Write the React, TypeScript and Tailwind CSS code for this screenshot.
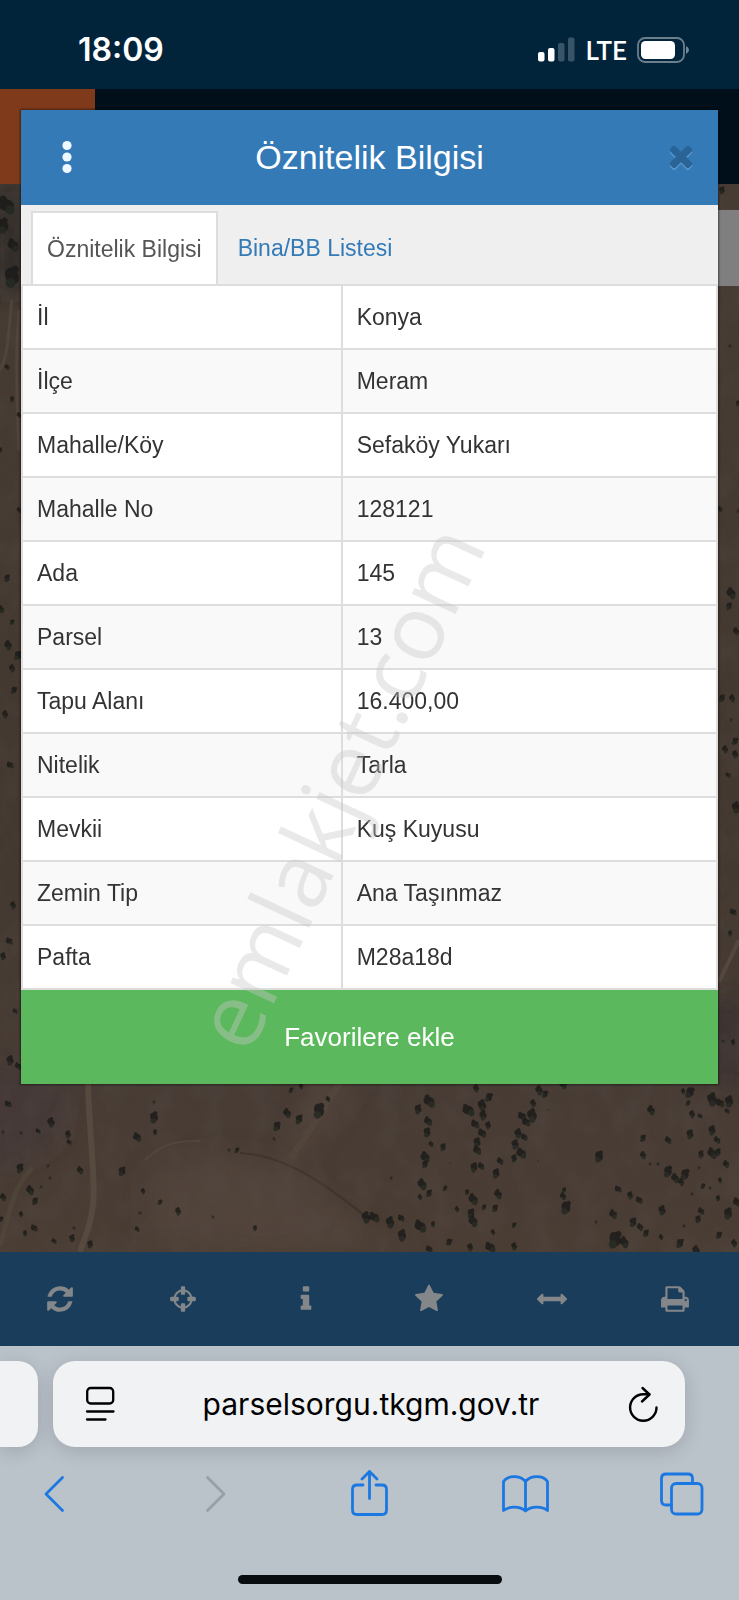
import type { ReactNode } from 'react';

const rows = [
  { label: 'İl', value: 'Konya' },
  { label: 'İlçe', value: 'Meram' },
  { label: 'Mahalle/Köy', value: 'Sefaköy Yukarı' },
  { label: 'Mahalle No', value: '128121' },
  { label: 'Ada', value: '145' },
  { label: 'Parsel', value: '13' },
  { label: 'Tapu Alanı', value: '16.400,00' },
  { label: 'Nitelik', value: 'Tarla' },
  { label: 'Mevkii', value: 'Kuş Kuyusu' },
  { label: 'Zemin Tip', value: 'Ana Taşınmaz' },
  { label: 'Pafta', value: 'M28a18d' },
];

const tools = [
  {
    label: 'Yenile',
    path: 'M1639 1056q0 5-1 7-64 268-268 434.5t-478 166.5q-146 0-282.5-55t-243.5-157l-129 129q-19 19-45 19t-45-19-19-45v-448q0-26 19-45t45-19h448q26 0 45 19t19 45-19 45l-137 137q71 66 161 102t187 36q134 0 250-65t186-179q11-17 53-117 8-23 30-23h192q13 0 22.5 9.5t9.5 22.5zm25-800v448q0 26-19 45t-45 19h-448q-26 0-45-19t-19-45 19-45l138-138q-148-137-349-137-134 0-250 65t-186 179q-11 17-53 117-8 23-30 23h-199q-13 0-22.5-9.5t-9.5-22.5v-7q65-268 270-434.5t480-166.5q146 0 284 55.5t245 156.5l130-129q19-19 45-19t45 19 19 45z',
  },
  {
    label: 'Konum',
    path: 'M1325 1024h-109q-26 0-45-19t-19-45v-128q0-26 19-45t45-19h109q-32-108-112.5-188.5t-188.5-112.5v109q0 26-19 45t-45 19h-128q-26 0-45-19t-19-45v-109q-108 32-188.5 112.5t-112.5 188.5h109q26 0 45 19t19 45v128q0 26-19 45t-45 19h-109q32 108 112.5 188.5t188.5 112.5v-109q0-26 19-45t45-19h128q26 0 45 19t19 45v109q108-32 188.5-112.5t112.5-188.5zm339-192v128q0 26-19 45t-45 19h-143q-37 161-154.5 278.5t-278.5 154.5v143q0 26-19 45t-45 19h-128q-26 0-45-19t-19-45v-143q-161-37-278.5-154.5t-154.5-278.5h-143q-26 0-45-19t-19-45v-128q0-26 19-45t45-19h143q37-161 154.5-278.5t278.5-154.5v-143q0-26 19-45t45-19h128q26 0 45 19t19 45v143q161 37 278.5 154.5t154.5 278.5h143q26 0 45 19t19 45z',
  },
  {
    label: 'Bilgi',
    path: 'M1216 1344v128q0 26-19 45t-45 19h-512q-26 0-45-19t-19-45v-128q0-26 19-45t45-19h64v-384h-64q-26 0-45-19t-19-45v-128q0-26 19-45t45-19h384q26 0 45 19t19 45v576h64q26 0 45 19t19 45zm-128-1152v192q0 26-19 45t-45 19h-256q-26 0-45-19t-19-45v-192q0-26 19-45t45-19h256q26 0 45 19t19 45z',
  },
  {
    label: 'Favoriler',
    path: 'M1728 647q0 22-26 48l-363 354 86 500q1 7 1 20 0 21-10.5 35.5t-30.5 14.5q-19 0-40-12l-449-236-449 236q-22 12-40 12-21 0-31.5-14.5t-10.5-35.5q0-6 2-20l86-500-364-354q-25-27-25-48 0-37 56-46l502-73 225-455q19-41 49-41t49 41l225 455 502 73q56 9 56 46z',
  },
  {
    label: 'Ölçüm',
    path: 'M1792 896q0 26-19 45l-256 256q-19 19-45 19t-45-19-19-45v-128h-1024v128q0 26-19 45t-45 19-45-19l-256-256q-19-19-19-45t19-45l256-256q19-19 45-19t45 19 19 45v128h1024v-128q0-26 19-45t45-19 45 19l256 256q19 19 19 45z',
  },
  {
    label: 'Yazdır',
    path: 'M448 1536h896v-256h-896v256zm0-640h896v-384h-160q-40 0-68-28t-28-68v-160h-640v640zm1152 64q0-26-19-45t-45-19-45 19-19 45 19 45 45 19 45-19 19-45zm128 0v416q0 13-9.5 22.5t-22.5 9.5h-224v160q0 40-28 68t-68 28h-960q-40 0-68-28t-28-68v-160h-224q-13 0-22.5-9.5t-9.5-22.5v-416q0-79 56.5-135.5t135.5-56.5h64v-544q0-40 28-68t68-28h672q40 0 88 20t76 48l152 152q28 28 48 76t20 88v256h64q79 0 135.5 56.5t56.5 135.5z',
  },
];

const closePath =
  'M1490 1322q0 40-28 68l-136 136q-28 28-68 28t-68-28l-294-294-294 294q-28 28-68 28t-68-28l-136-136q-28-28-28-68t28-68l294-294-294-294q-28-28-28-68t28-68l136-136q28-28 68-28t68 28l294 294 294-294q28-28 68-28t68 28l136 136q28 28 28 68t-28 68l-294 294 294 294q28 28 28 68z';

// x, y, radius of every bush on the satellite layer
const bushes: [number, number, number][] = [
  // below the dialog, left half
  [8, 1104, 4], [51, 1122, 5], [38, 1131, 3], [68, 1134, 4], [69, 1142, 3], [3, 1132, 2], [21, 1133, 2],
  [154, 1117, 6], [137, 1137, 5], [155, 1132, 3], [154, 1102, 2], [20, 1168, 5], [80, 1170, 4], [122, 1171, 5],
  [30, 1190, 5], [35, 1201, 4], [3, 1197, 4], [48, 1166, 2], [50, 1178, 2], [41, 1187, 2], [143, 1191, 3],
  [160, 1202, 3], [178, 1211, 4], [140, 1213, 2], [21, 1214, 3], [34, 1228, 4], [25, 1233, 3], [54, 1241, 3],
  [72, 1238, 4], [74, 1228, 2], [90, 1244, 4], [137, 1229, 3], [255, 1228, 3], [213, 1217, 2],
  [319, 1110, 8], [328, 1099, 3], [299, 1119, 5], [287, 1113, 5], [277, 1126, 5], [274, 1139, 2],
  [291, 1090, 3], [301, 1086, 3], [237, 1150, 3], [229, 1150, 2], [1, 1219, 3],
  // below the dialog, right half
  [366, 1217, 6], [374, 1217, 6], [390, 1222, 6], [401, 1218, 4], [402, 1235, 6], [420, 1226, 7], [433, 1224, 3],
  [429, 1101, 7], [418, 1109, 5], [428, 1121, 5], [427, 1132, 5], [431, 1144, 3], [443, 1147, 4], [425, 1157, 6],
  [425, 1164, 4], [422, 1184, 6], [429, 1193, 4], [420, 1197, 3], [445, 1188, 3], [457, 1209, 3], [391, 1178, 2],
  [476, 1088, 4], [489, 1097, 5], [482, 1105, 6], [468, 1110, 7], [483, 1115, 5], [475, 1124, 5], [488, 1125, 4],
  [482, 1133, 5], [477, 1142, 5], [477, 1150, 5], [474, 1167, 5], [481, 1166, 4], [467, 1192, 3], [473, 1199, 6],
  [471, 1213, 5], [473, 1221, 6], [484, 1207, 3], [498, 1194, 5], [495, 1208, 4], [493, 1232, 3], [514, 1225, 3],
  [539, 1090, 5], [545, 1094, 4], [533, 1103, 4], [522, 1116, 5], [532, 1115, 7], [526, 1122, 5], [518, 1133, 5],
  [524, 1137, 4], [515, 1144, 5], [521, 1153, 6], [514, 1158, 4], [500, 1161, 4], [496, 1173, 5], [548, 1110, 1],
  [599, 1156, 6], [563, 1084, 5], [566, 1207, 7], [563, 1196, 4], [564, 1190, 3],
  [651, 1110, 5], [643, 1138, 4], [643, 1155, 4], [690, 1092, 6], [683, 1091, 3], [688, 1103, 3], [692, 1114, 4],
  [700, 1116, 3], [712, 1099, 7], [720, 1103, 5], [729, 1101, 6], [727, 1111, 3], [712, 1130, 5], [717, 1140, 4],
  [690, 1134, 5], [668, 1140, 4], [701, 1154, 4], [712, 1153, 6], [718, 1152, 4], [726, 1164, 4], [668, 1171, 6],
  [675, 1178, 5], [685, 1174, 6], [681, 1182, 4], [650, 1164, 2], [658, 1164, 2], [699, 1168, 2], [720, 1180, 3],
  [703, 1186, 3], [710, 1188, 2], [618, 1189, 4], [630, 1195, 4], [639, 1200, 4], [662, 1210, 5], [692, 1194, 2],
  [718, 1198, 3], [737, 1202, 5], [728, 1213, 6], [701, 1211, 4], [698, 1219, 4], [613, 1214, 5], [633, 1222, 5],
  [640, 1227, 4], [615, 1239, 9], [624, 1242, 6], [646, 1233, 4], [661, 1237, 3], [680, 1243, 5], [696, 1250, 5],
  [719, 1235, 4], [734, 1243, 4], [449, 1242, 4], [470, 1247, 4], [490, 1247, 6], [514, 1246, 4], [429, 1249, 4],
  [596, 1222, 2], [684, 1226, 2], [450, 1163, 1], [538, 1161, 1],
  // right edge strip
  [722, 190, 4], [730, 346, 2], [738, 403, 3], [720, 509, 3], [738, 511, 2], [731, 593, 6], [729, 606, 4],
  [736, 631, 4], [722, 698, 4], [732, 698, 4], [731, 720, 2], [725, 749, 4], [735, 741, 4], [735, 754, 4],
  [728, 775, 3], [736, 807, 6], [733, 912, 4], [730, 933, 3], [723, 1041, 2], [733, 1042, 3],
  // left edge strip
  [6, 205, 10], [3, 225, 8], [13, 245, 7], [12, 276, 11], [7, 367, 3], [12, 399, 3], [19, 415, 3], [0, 450, 3],
  [19, 510, 3], [7, 578, 4], [1, 609, 4], [12, 622, 3], [8, 645, 5], [18, 655, 5], [12, 668, 4], [14, 690, 4],
  [5, 714, 4], [10, 765, 4], [13, 905, 4], [9, 941, 4], [3, 956, 4], [15, 1011, 3], [10, 1060, 5], [18, 1066, 4],
];

function SatelliteMap() {
  return (
    <svg
      className="absolute inset-0 h-full w-full"
      viewBox="0 184 739 1068"
      preserveAspectRatio="xMidYMax slice"
      aria-hidden="true"
    >
      <defs>
        <linearGradient id="soil" x1="0" y1="0" x2="0" y2="1">
          <stop offset="0" stopColor="#473c34" />
          <stop offset="0.6" stopColor="#43382f" />
          <stop offset="0.85" stopColor="#483c35" />
          <stop offset="1" stopColor="#4a3d34" />
        </linearGradient>
        <filter id="grain" x="0" y="0" width="100%" height="100%">
          <feTurbulence type="fractalNoise" baseFrequency="0.04 0.03" numOctaves="4" seed="8" />
          <feColorMatrix values="0 0 0 0 0.1  0 0 0 0 0.08  0 0 0 0 0.07  1.6 0 0 0 -0.6" />
        </filter>
        <filter id="soft">
          <feGaussianBlur stdDeviation="0.6" />
        </filter>
        <filter id="haze" x="-30%" y="-30%" width="160%" height="160%">
          <feGaussianBlur stdDeviation="12" />
        </filter>
      </defs>
      <rect y="184" width="739" height="1068" fill="url(#soil)" />
      <g filter="url(#haze)">
        <path d="M150 1170q80-30 140 5t90 70l-120 10-110-10z" fill="#5a4c3f" opacity="0.5" />
        <path d="M320 1080h40l-60 80h-20z" fill="#5b4c3f" opacity="0.5" />
        <path d="M-10 1070h80l-10 70-70 40z" fill="#40383a" opacity="0.45" />
        <path d="M0 184h22v110H0z" fill="#22221f" opacity="0.8" />
        <path d="M718 1000h21v83h-21z" fill="#352e30" opacity="0.9" />
      </g>
      <g filter="url(#soft)" fill="none">
        <path d="M88 1083C89 1130 96 1180 93 1205S84 1238 80 1252" stroke="#5f5246" strokeWidth="6" opacity="0.65" />
        <path d="M0 1245C12 1205 12 1190 32 1168" stroke="#5b4d42" strokeWidth="5" opacity="0.4" />
        <path d="M240 1153C280 1155 315 1175 370 1220" stroke="#362c28" strokeWidth="2" opacity="0.6" />
        <path d="M145 1160C160 1146 172 1140 200 1141" stroke="#5c4e42" strokeWidth="2" opacity="0.5" />
        <path d="M340 1083C322 1108 312 1130 290 1158" stroke="#5c4e42" strokeWidth="7" opacity="0.35" />
        <path d="M12 300C8 330 10 350 0 370M19 310C15 360 17 400 19 450" stroke="#5a5043" strokeWidth="3" opacity="0.5" />
        <path d="M739 940l-20 42" stroke="#5f5349" strokeWidth="4" opacity="0.6" />
      </g>
      <rect y="184" width="739" height="1068" filter="url(#grain)" opacity="0.35" />
      <g filter="url(#soft)" fill="#1a1b17">
        {bushes.map(([x, y, r], i) => (
          <g key={i} transform={`rotate(${(i * 47) % 90} ${x} ${y})`} opacity={r > 2 ? 0.8 : 0.5}>
            <ellipse cx={x} cy={y} rx={r * 0.8} ry={r * 0.6} />
            <circle cx={x + r * 0.5} cy={y + r * 0.4} r={r * 0.45} fill="#24261f" />
            <circle cx={x - r * 0.4} cy={y - r * 0.5} r={r * 0.35} />
          </g>
        ))}
      </g>
    </svg>
  );
}

function StatusBar() {
  return (
    <header className="flex h-[89px] items-center justify-between bg-[#02243b] pt-2.5 pr-[50px] pl-[78px] font-['Inter',sans-serif] text-white">
      <time className="text-[32px] leading-10 font-semibold">18:09</time>
      <div className="flex items-center gap-2.5">
        <svg width="37" height="25" viewBox="0 0 37 25" fill="#fff" aria-hidden="true">
          <rect x="0" y="15" width="6.5" height="9.5" rx="2" />
          <rect x="10" y="11" width="6.5" height="13.5" rx="2" />
          <rect x="20" y="6" width="6.5" height="18.5" rx="2" opacity="0.22" />
          <rect x="30" y="0.5" width="6.5" height="24" rx="2" opacity="0.22" />
        </svg>
        <span className="font-['Lato',sans-serif] text-[26px] leading-8 font-semibold">LTE</span>
        <svg width="52" height="26" viewBox="0 0 52 26" fill="#fff" aria-hidden="true">
          <rect x="1" y="1" width="46" height="24" rx="7" fill="none" stroke="#fff" strokeWidth="1.8" opacity="0.42" />
          <rect x="4" y="4" width="34" height="18" rx="4.5" />
          <path d="M49 9q3 1.4 3 4t-3 4z" opacity="0.45" />
        </svg>
      </div>
    </header>
  );
}

function ParcelDialog() {
  return (
    <section
      role="dialog"
      aria-label="Öznitelik Bilgisi"
      className="relative mx-[21px] mt-[21px] mb-[168px] bg-white shadow-[0_0_2px_1px_rgba(0,0,0,0.45)]"
    >
      <div className="flex h-[95px] items-center justify-between bg-[#337ab7] px-3 pb-0.5">
        <button type="button" aria-label="Menü" className="flex h-14 w-[68px] items-center justify-center">
          <svg width="10" height="34" viewBox="0 0 10 34" fill="#eefaff" aria-hidden="true">
            <circle cx="5" cy="5.5" r="4.6" />
            <circle cx="5" cy="17" r="4.6" />
            <circle cx="5" cy="28.5" r="4.6" />
          </svg>
        </button>
        <h1 className="text-[34px] leading-10 text-white">Öznitelik Bilgisi</h1>
        <button type="button" aria-label="Kapat" className="flex h-14 w-[68px] items-center justify-end pr-2">
          <svg width="34" height="34" viewBox="0 64 1792 1792" aria-hidden="true">
            <path d={closePath} transform="translate(0 90)" fill="#5f9bd0" />
            <path d={closePath} fill="#2a6496" />
          </svg>
        </button>
      </div>

      <div role="tablist" className="flex h-[79px] items-end bg-[#efefef] px-2.5 text-[23px] leading-8">
        <button
          type="button"
          role="tab"
          aria-selected="true"
          className="h-[73px] border-2 border-b-0 border-[#ddd] bg-white px-3.5 text-[#555]"
        >
          Öznitelik Bilgisi
        </button>
        <button type="button" role="tab" aria-selected="false" className="h-[73px] px-5 text-[#337ab7]">
          Bina/BB Listesi
        </button>
      </div>

      <table className="w-full table-fixed border-collapse text-[23px] leading-8 text-[#333]">
        <tbody>
          {rows.map((row) => (
            <tr key={row.label} className="h-16 even:bg-[#f9f9f9]">
              <th scope="row" className="w-[46%] border-2 border-[#ddd] px-3.5 text-left font-normal">
                {row.label}
              </th>
              <td className="border-2 border-[#ddd] px-3.5">{row.value}</td>
            </tr>
          ))}
        </tbody>
      </table>

      <button type="button" className="h-[94px] w-full bg-[#5cb85c] text-[26px] leading-8 text-white">
        Favorilere ekle
      </button>

      <div className="pointer-events-none absolute inset-0 flex items-center justify-center pt-[378px] pr-[66px]">
        <span className="-rotate-65 font-['Open_Sans',sans-serif] text-[90px] leading-none whitespace-nowrap text-[#c8c8c8]/40">
          emlakjet.com
        </span>
      </div>
    </section>
  );
}

function Toolbar() {
  return (
    <nav className="flex h-[94px] items-center bg-[#1a3d5c]">
      {tools.map((tool) => (
        <button key={tool.label} type="button" aria-label={tool.label} className="flex h-full flex-1 items-center justify-center pr-1">
          <svg width="30" height="30" viewBox="0 0 1792 1792" fill="#848789" aria-hidden="true">
            <path d={tool.path} />
          </svg>
        </button>
      ))}
    </nav>
  );
}

interface NavButtonProps {
  label: string;
  disabled?: boolean;
  children: ReactNode;
}

function NavButton({ label, disabled, children }: NavButtonProps) {
  return (
    <button
      type="button"
      aria-label={label}
      disabled={disabled}
      className="h-12 w-12 text-[#1b78e2] disabled:text-[#989fa6]"
    >
      <svg
        width="48"
        height="48"
        viewBox="0 0 48 48"
        fill="none"
        stroke="currentColor"
        strokeWidth="2.8"
        strokeLinecap="round"
        strokeLinejoin="round"
        aria-hidden="true"
      >
        {children}
      </svg>
    </button>
  );
}

function BrowserBar() {
  return (
    <footer className="overflow-hidden bg-[#bac2ca] pt-[15px] pb-4">
      <div className="flex gap-[15px] pr-[54px]">
        <div className="h-[86px] w-[38px] shrink-0 rounded-r-[20px] bg-[#f0f2f4] shadow-[0_4px_20px_rgba(0,0,0,0.14)]" />
        <div className="flex h-[86px] flex-1 items-center justify-between rounded-[22px] bg-[#f0f2f4] pr-6 pl-8 text-black shadow-[0_4px_20px_rgba(0,0,0,0.14)]">
          <button type="button" aria-label="Sayfa menüsü">
            <svg width="32" height="36" viewBox="0 0 32 36" fill="none" stroke="currentColor" strokeWidth="2.3" strokeLinecap="round" aria-hidden="true">
              <rect x="2.2" y="2" width="26" height="15.5" rx="3.5" />
              <path d="M2 25.5h26.5M2 33.5h18.5" />
            </svg>
          </button>
          <a href="#" className="font-['Inter',sans-serif] text-[30px] leading-10">
            parselsorgu.tkgm.gov.tr
          </a>
          <button type="button" aria-label="Yeniden yükle">
            <svg width="36" height="38" viewBox="0 0 36 38" fill="none" stroke="currentColor" strokeWidth="2.4" strokeLinecap="round" strokeLinejoin="round" aria-hidden="true">
              <path d="M31.500 22.500A13.200 13.200 0 1 1 18.300 9.300h6" />
              <path d="M17.500 3l7 6.500-7.500 7" />
            </svg>
          </button>
        </div>
      </div>

      <div className="mt-[23px] flex justify-between pr-[33px] pl-[31px]">
        <NavButton label="Geri">
          <path d="M31.500 7.500L15 24l16.500 16.500" />
        </NavButton>
        <NavButton label="İleri" disabled>
          <path d="M19.500 7.500L36 24l-16.500 16.500" />
        </NavButton>
        <NavButton label="Paylaş">
          <path d="M18 15h-6q-4.500 0-4.500 4.500v20.500q0 4.500 4.500 4.500h25q4.500 0 4.500-4.500V19.500q0-4.500-4.500-4.500h-6M24.500 28.500V1.500M17 9l7.500-7.500L32 9" />
        </NavButton>
        <NavButton label="Yer işaretleri">
          <path d="M24.500 11.500C19 5 7 5 2.500 11.500V40.500C8 36 19 36 24.500 41C30 36 41 36 46.500 40.500V11.500C42 5 30 5 24.500 11.500zM24.500 11.500V41" />
        </NavButton>
        <NavButton label="Sekmeler">
          <rect x="13.500" y="13.500" width="30.500" height="30.500" rx="4.500" />
          <path d="M13 35H8q-4.500 0-4.500-4.500V8.500Q3.500 4 8 4h22q4.500 0 4.500 4.500v4.500" />
        </NavButton>
      </div>

      <div className="mx-auto mt-[57px] h-[9px] w-[264px] rounded-full bg-[#0a0d0f]" />
    </footer>
  );
}

export default function App() {
  return (
    <div className="flex min-h-screen flex-col bg-[#bac2ca] font-['Liberation_Sans',Arial,sans-serif]">
      <StatusBar />
      <main className="relative">
        <div className="absolute inset-0 flex flex-col">
          <div className="h-[95px] bg-[#010f1b]">
            <div className="h-full w-[95px] bg-[#7f3a1c]" />
          </div>
          <div className="relative flex-1 overflow-hidden">
            <SatelliteMap />
            <div className="absolute top-[26px] right-0 h-[76px] w-2/3 bg-[#7f7f7f]" />
          </div>
        </div>
        <ParcelDialog />
      </main>
      <Toolbar />
      <BrowserBar />
    </div>
  );
}
